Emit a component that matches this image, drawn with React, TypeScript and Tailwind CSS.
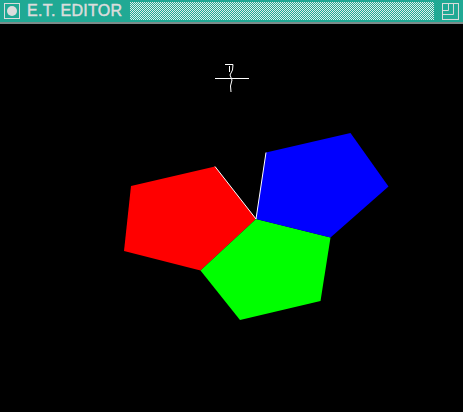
export default function App() {
  return (
    <div className="flex h-[412px] w-[463px] flex-col overflow-hidden bg-black">
      <div className="flex h-[22px] items-center bg-[#20a994] pl-[4px] pr-[4px]">
        <div className="flex h-[16px] w-[16px] items-center justify-center border border-[#dcdcdc]">
          <div className="h-[10px] w-[10px] rounded-full bg-[#dcdcdc]" />
        </div>
        <span className="ml-[7px] w-[103px] font-['Liberation_Sans',Arial,sans-serif] text-[16px] leading-none tracking-[0.3px] text-[#dcdcdc] [-webkit-text-stroke:0.5px_#dcdcdc]">
          E.T. EDITOR
        </span>
        {/* 1px checker fill of the title bar */}
        <svg width="305" height="18" className="block">
          <defs>
            <pattern id="chk" width="2" height="2" patternUnits="userSpaceOnUse">
              <rect width="2" height="2" fill="#20a994" />
              <rect width="1" height="1" fill="#e2eeea" />
              <rect x="1" y="1" width="1" height="1" fill="#e2eeea" />
            </pattern>
          </defs>
          <rect width="305" height="18" fill="url(#chk)" />
        </svg>
        <svg width="17" height="17" viewBox="0 0 17 17" className="ml-[8px]">
          <g fill="none" stroke="#dcdcdc" strokeWidth="1">
            <rect x="0.5" y="0.5" width="16" height="16" />
            <polyline points="11.5,0.5 11.5,11.5 0.5,11.5" />
            <polyline points="6.5,0.5 6.5,7.5 0.5,7.5" />
          </g>
        </svg>
      </div>
      <div className="h-[2px] bg-[#7b8b89]" />
      <svg width="463" height="388" viewBox="0 24 463 388" className="block">
        <polygon
          points="131,186 215,166.5 256,219 200.5,270.5 124,251"
          fill="#ff0000"
        />
        <polygon
          points="256,219 330.5,237.5 320.5,301 240,320 200.5,270.5"
          fill="#00ff00"
        />
        <polygon
          points="266,152.5 350.5,133 388.5,186.5 330.5,237.5 256,219"
          fill="#0000ff"
        />
        <g stroke="#ffffff" strokeWidth="1" fill="none">
          <line x1="215" y1="166.5" x2="256" y2="219" />
          <line x1="266" y1="152.5" x2="256" y2="219" />
          <line x1="215" y1="78.5" x2="249" y2="78.5" />
          <polyline points="225,64.5 233,64.5 232.5,70 230,75 232,80 230.5,86 231,92" />
          <polyline points="229.5,66 229.5,72" />
        </g>
      </svg>
    </div>
  )
}
